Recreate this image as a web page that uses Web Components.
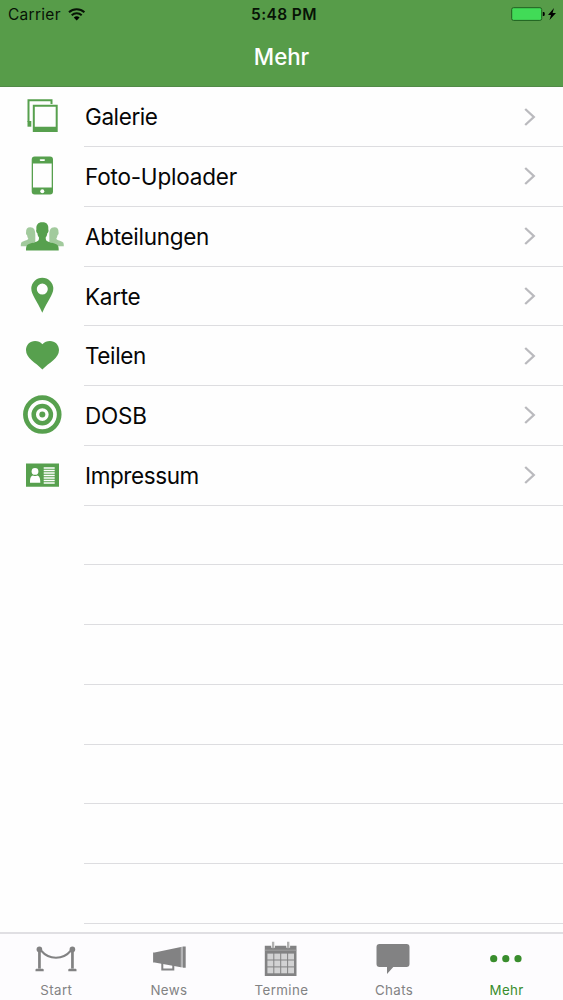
<!DOCTYPE html>
<html lang="de">
<head>
<meta charset="utf-8">
<title>Mehr</title>
<style>
html,body{margin:0;height:100%;background:#fefefe;overflow:hidden}
body{font-family:Inter,"Liberation Sans",sans-serif;color:#060606}
</style>
</head>
<body>
<more-screen></more-screen>
<script>
const ICONS = {
  gallery: '<path d="M51.500 17v-3.700H28.500V35" fill="none" stroke="currentColor" stroke-width="2"/><path d="M27.500 34h3.800v5.700h-3.800z"/><path fill-rule="evenodd" d="M32.800 17.700h24.900V45H32.800zM34.800 19.700v20h20.900v-20z"/>',
  phone: '<path fill-rule="evenodd" d="M34.700 9.600H50a3 3 0 0 1 3 3v32a3 3 0 0 1-3 3H34.700a3 3 0 0 1-3-3v-32a3 3 0 0 1 3-3zM33 16.600v24h18.700v-24z"/><rect x="39.700" y="12.200" width="5.300" height="1.700" rx=".8" fill="#fff"/><circle cx="42.300" cy="44.300" r="2" fill="#fff"/>',
  people: '<g opacity=".55"><path d="M30.200 20.200c-3 0-4.200 1.800-4.100 4.700-.4 1.700.3 2.900 1 3.300.2 1.700.7 2.500 1.200 3.300-.2 2.300-5.300 1.900-7.100 4.300-.4 1-.4 2.200-.4 3.400h7c1.800-2.400 5-3.200 7.500-4.200v-7c0-5-1.100-7.800-5.100-7.800z"/><path d="M54.400 20.200c3 0 4.200 1.800 4.100 4.700.4 1.700-.3 2.900-1 3.300-.2 1.700-.7 2.500-1.200 3.300.2 2.300 5.300 1.900 7.100 4.300.4 1 .4 2.200.4 3.400h-7c-1.800-2.400-5-3.200-7.500-4.200v-7c0-5 1.100-7.800 5.100-7.800z"/></g><path d="M42.400 15.200c-4.700 0-6.400 2.700-6 7-.7 1.600.2 3.500 1 4 .2 2.200 1 3.400 1.600 4.400 0 2.400-.3 3.200-2.700 4.200-4.200 1.500-8.700 1.700-9.800 4.500-.5 1.300-.5 2.600-.5 4.200h32.700c0-1.600 0-2.900-.5-4.200-1.100-2.800-5.600-3-9.800-4.500-2.400-1-2.700-1.800-2.700-4.200.6-1 1.400-2.200 1.600-4.400.8-.5 1.700-2.400 1-4 .4-4.300-1.200-7-5.900-7z"/>',
  pin: '<path fill-rule="evenodd" d="M42.300 10.800a11 11 0 0 1 11 11c0 6-5.800 11.800-11 24-5.200-12.200-11-18-11-24a11 11 0 0 1 11-11zm0 5.800a5.500 5.500 0 1 0 0 11 5.500 5.500 0 0 0 0-11z"/>',
  heart: '<path d="M42.400 18.300C44.500 15.800 47 14.900 49.900 14.900c5.200 0 9.100 3.900 9.100 9.200 0 8.200-9.700 12.600-16.600 19.300C35.500 36.700 26 32.300 26 24.100c0-5.300 3.900-9.200 9.100-9.200 2.900 0 5.300.9 7.300 3.400z"/>',
  target: '<circle cx="42.300" cy="28.600" r="16.900" fill="none" stroke="currentColor" stroke-width="4.700"/><circle cx="42.300" cy="28.600" r="8.600" fill="none" stroke="currentColor" stroke-width="4.500"/><circle cx="42.300" cy="28.600" r="3"/>',
  card: '<path d="M26 17.500h33v23.300H26z"/><g fill="#fff"><circle cx="35" cy="25.400" r="3.400"/><path d="M30 36.700c0-4.500.6-6.600 3-7.200 1.300.8 2.800.8 4.100 0 2.500.6 3.200 2.700 3.200 7.200z"/></g><path d="M43.700 22h11M43.700 24.500h11M43.700 27h11M43.700 29.500h11M43.700 32h11M43.700 34.500h11M43.700 37h11" stroke="#fff" stroke-width="1.300"/>',
  start: '<circle cx="39.400" cy="15.400" r="2.800"/><circle cx="72.400" cy="15.400" r="2.800"/><path d="M38.100 17h2.700v17.500h-2.700zM71.100 17h2.700v17.500h-2.700zM35.500 37.200v-1.400q0-1 1-1h6.200q1 0 1 1v1.400zM68.300 37.200v-1.400q0-1 1-1h6.200q1 0 1 1v1.400z"/><path d="M41 16.500c8 9.600 22 9.600 30 0" fill="none" stroke="currentColor" stroke-width="2"/>',
  news: '<path d="M40.100 18.500h1.500l26.300-5.500v20.200l-26.300-4.800h-1.500zM70 12.500h2.700v21.300H70z"/><path d="M67.900 13l2.100-.5v21.100l-2.100-.4z" opacity=".6"/><path d="M49.300 29v6.500h11V31" fill="none" stroke="currentColor" stroke-width="2"/>',
  calendar: '<path d="M39.800 11.700h31.700v30.200H39.800z"/><path d="M39.800 16.200h31.700" stroke="#aaa" stroke-width=".8"/><g fill="#d2d2d3">' + [0,1,2].map(r => [0,1,2,3].map(c => `<path d="M${42.4+c*6.9} ${19.6+r*6.9}h5.900v5.900h-5.900z"/>`).join('')).join('') + '</g><path d="M48.100 8v5.800M63.200 8v5.800" stroke="#fff" stroke-width="3.800"/><path d="M48.100 7.800v6.400M63.200 7.800v6.400" stroke="#b0b0b0" stroke-width="2.400"/>',
  chat: '<path d="M41.500 10h27a3 3 0 0 1 3 3v17a3 3 0 0 1-3 3H55.300l-6.300 7v-7h-7.500a3 3 0 0 1-3-3V13a3 3 0 0 1 3-3z"/>',
  more: '<circle cx="42.700" cy="24.700" r="3.600"/><circle cx="54.800" cy="24.700" r="3.600"/><circle cx="67" cy="24.700" r="3.600"/>'
};

class Base extends HTMLElement {
  constructor() { super(); this.attachShadow({ mode: 'open' }); }
  connectedCallback() { this.shadowRoot.innerHTML = this.render(); }
}

customElements.define('status-bar', class extends Base {
  render() { return `<style>
    :host{display:grid;grid-template-columns:1fr auto 1fr;align-items:center;height:28px;padding:0 6px 0 8px;font-size:15.500px;line-height:28px;color:#071306}
    .left,.right{display:flex;align-items:center}.left{gap:7px}.right{justify-content:flex-end}
    span{padding-top:1px;height:28px}
    .carrier{letter-spacing:.28px}.time{font-weight:600;letter-spacing:.4px;padding-left:3px}
    svg{display:block}.right svg{margin-top:-1px}.left svg{margin-top:-1px}
    </style>
    <div class="left"><span class="carrier">Carrier</span>
    <svg width="18" height="14" viewBox="0 0 18 14"><g fill="none" stroke="#071306" stroke-width="2"><path d="M1 5.200a11.300 11.300 0 0 1 15.400 0"/><path d="M3.700 8.300a7.400 7.400 0 0 1 10 0"/></g><path d="M5.800 10.400a4.400 4.400 0 0 1 5.800 0l-2.900 3z"/></svg></div>
    <span class="time">5:48 PM</span>
    <div class="right"><svg width="46" height="16" viewBox="0 0 46 16"><rect x=".7" y="1.700" width="30" height="12.700" rx="1.800" fill="#41db57" stroke="#205f20" stroke-width="1"/><path d="M31.800 6h1q1 .2 1 2t-1 2h-1z"/><path d="M43 2l-6 7h3l-1.500 5L45 7h-3.400z"/></svg></div>`; }
});

customElements.define('nav-header', class extends Base {
  render() { return `<style>
    :host{display:flex;flex-direction:column;height:87px;box-sizing:border-box;background:#579c49;border-bottom:1px solid #528a48}
    h1{margin:0;text-align:center;color:#fff;font-size:22.300px;font-weight:500;line-height:58px;letter-spacing:-.05px}
    </style><status-bar></status-bar><h1><slot></slot></h1>`; }
});

customElements.define('menu-row', class extends Base {
  render() { const icon = this.getAttribute('icon'); return `<style>
    :host{display:flex;height:59.750px;flex:none}
    .icon{width:84px;height:59px;flex:none;color:#57a04e;fill:currentColor}
    .cell{flex:1;display:flex;align-items:center;justify-content:space-between;box-sizing:border-box;border-bottom:1px solid #dddde0;padding:0 27px 0 1px}
    .label{font-size:22.500px;line-height:30px;padding-top:1.500px;letter-spacing:var(--track,-.2px)}
    </style>
    <svg class="icon" viewBox="0 0 84 59">${ICONS[icon] || ''}</svg>
    <div class="cell"><span class="label"><slot></slot></span>${icon ? '<svg width="12" height="18" viewBox="0 0 12 18"><path d="M1.200 1L9.800 9l-8.600 8" fill="none" stroke="#bababe" stroke-width="2.300"/></svg>' : ''}</div>`; }
});

customElements.define('tab-item', class extends Base {
  render() { return `<style>
    :host{display:flex;flex-direction:column;align-items:center;flex:1;min-width:0;color:#828283}
    :host([active]){color:#398d2d}
    svg{width:112px;height:48px;flex:none;fill:currentColor}
    span{font-size:13.300px;line-height:17px;letter-spacing:.4px}
    </style><svg viewBox="0 0 112 48">${ICONS[this.getAttribute('icon')]}</svg><span><slot></slot></span>`; }
});

customElements.define('tab-bar', class extends Base {
  render() { return `<style>
    :host{display:flex;height:68px;box-sizing:border-box;border-top:2px solid #e0dfe3;background:#fdfcfe;flex:none}
    </style><slot></slot>`; }
});

customElements.define('more-screen', class extends Base {
  render() { return `<style>
    :host{display:flex;flex-direction:column;height:1000px;background:#fefefe}
    nav-header{flex:none}
    main{flex:1;min-height:0;overflow:hidden;display:flex;flex-direction:column;padding-top:.25px}
    .tight{--track:-.4px}
    .snug{--track:-.3px}
    </style>
    <nav-header>Mehr</nav-header>
    <main><menu-row icon="gallery" class="tight">Galerie</menu-row><menu-row icon="phone">Foto-Uploader</menu-row><menu-row icon="people" class="snug">Abteilungen</menu-row><menu-row icon="pin" class="snug">Karte</menu-row><menu-row icon="heart" class="tight">Teilen</menu-row><menu-row icon="target">DOSB</menu-row><menu-row icon="card" class="tight">Impressum</menu-row>${'<menu-row></menu-row>'.repeat(7)}</main>
    <tab-bar><tab-item icon="start">Start</tab-item><tab-item icon="news">News</tab-item><tab-item icon="calendar">Termine</tab-item><tab-item icon="chat">Chats</tab-item><tab-item icon="more" active>Mehr</tab-item></tab-bar>`; }
});
</script>
</body>
</html>
